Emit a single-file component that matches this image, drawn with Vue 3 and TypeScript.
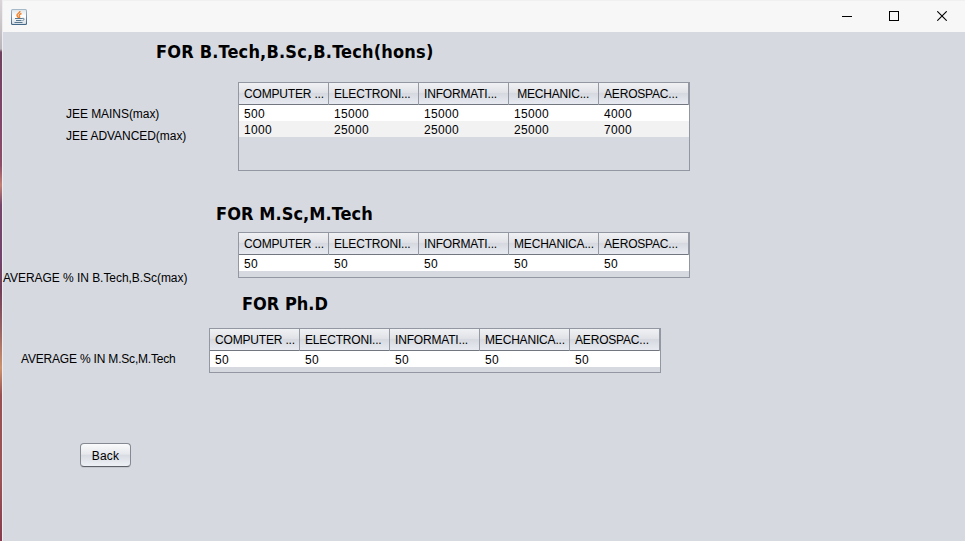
<script setup lang="ts">
interface Section {
  id: string
  title: string
  labels: string[]
  columns: string[]
  rows: string[][]
}

const sections: Section[] = [
  {
    id: 'btech',
    title: 'FOR B.Tech,B.Sc,B.Tech(hons)',
    labels: ['JEE MAINS(max)', 'JEE ADVANCED(max)'],
    columns: ['COMPUTER ...', 'ELECTRONI...', 'INFORMATI...', '\u00a0MECHANIC...', 'AEROSPAC...'],
    rows: [
      ['500', '15000', '15000', '15000', '4000'],
      ['1000', '25000', '25000', '25000', '7000'],
    ],
  },
  {
    id: 'mtech',
    title: 'FOR M.Sc,M.Tech',
    labels: ['AVERAGE % IN B.Tech,B.Sc(max)'],
    columns: ['COMPUTER ...', 'ELECTRONI...', 'INFORMATI...', 'MECHANICA...', 'AEROSPAC...'],
    rows: [['50', '50', '50', '50', '50']],
  },
  {
    id: 'phd',
    title: 'FOR Ph.D',
    labels: ['AVERAGE % IN M.Sc,M.Tech'],
    columns: ['COMPUTER ...', 'ELECTRONI...', 'INFORMATI...', 'MECHANICA...', 'AEROSPAC...'],
    rows: [['50', '50', '50', '50', '50']],
  },
]
</script>

<template>
  <div class="desktop">
    <div class="window">
      <header class="titlebar">
        <svg class="java" width="16" height="16" viewBox="0 0 16 16">
          <defs>
            <linearGradient id="tile" x1="0" y1="0" x2="0" y2="1">
              <stop offset="0" stop-color="#a9bccb" />
              <stop offset="1" stop-color="#3f6484" />
            </linearGradient>
            <linearGradient id="face" x1="0" y1="0" x2="0" y2="1">
              <stop offset="0" stop-color="#dfe7ec" />
              <stop offset=".45" stop-color="#ffffff" />
              <stop offset="1" stop-color="#d5dfe6" />
            </linearGradient>
          </defs>
          <rect width="16" height="16" rx="1.5" fill="url(#tile)" />
          <rect x="1" y="1" width="14" height="14" rx=".8" fill="url(#face)" />
          <path d="M9 2C9.3 4 5.5 4.600 6 6.500C6.200 7.500 7.500 8 7.500 9M10.500 4.500C8.500 5.300 7.500 6 8.500 7.200C9 8 8.600 8.600 8 9" fill="none" stroke="#ee8430" stroke-width="1.400" />
          <path d="M4 9.500H11M5 11.500H10.500M3.500 13.500H11.500M11 9.500C14 8.700 13.500 11.200 11.500 11.500" fill="none" stroke="#58788f" stroke-width="1" />
        </svg>
        <div class="controls">
          <svg width="10" height="10" viewBox="0 0 10 10"><path d="M0 5.500H10" /></svg>
          <svg width="10" height="10" viewBox="0 0 10 10"><rect x=".5" y=".5" width="9" height="9" /></svg>
          <svg class="close" width="10" height="10" viewBox="0 0 10 10"><path d="M.3.300L9.700 9.700M9.700.300L.3 9.700" /></svg>
        </div>
      </header>
      <main class="content">
        <section v-for="s in sections" :key="s.id" class="section" :class="s.id">
          <h2>{{ s.title }}</h2>
          <div class="body">
            <div class="labels">
              <div v-for="l in s.labels" :key="l" class="label">{{ l }}</div>
            </div>
            <div class="table">
              <div class="row head">
                <div v-for="c in s.columns" :key="c" class="cell">{{ c }}</div>
              </div>
              <div v-for="(r, i) in s.rows" :key="i" class="row">
                <div v-for="(v, j) in r" :key="j" class="cell">{{ v }}</div>
              </div>
            </div>
          </div>
        </section>
        <button class="back" type="button">Back</button>
      </main>
    </div>
  </div>
</template>

<style>
body {
  overflow: hidden;
}
</style>

<style scoped>
.desktop {
  box-sizing: border-box;
  width: 965px;
  height: 541px;
  padding-left: 2px;
  background: linear-gradient(#d9d5d9 0, #b9b5b9 49px, #70405f 52px, #81456a 120px, #8d4d67 165px, #c38074 185px, #76456c 205px, #71426b 260px, #723e58 290px, #986363 330px, #cc936d 368px, #985052 395px, #9b5355 480px, #873b4d 541px);
  font-family: "Liberation Sans", Arial, sans-serif;
  font-size: 12px;
  color: #000;
}
.window {
  box-sizing: border-box;
  height: 541px;
  border-left: 1px solid #ecedf1;
  background: #d6d9e0;
}
.titlebar {
  box-sizing: border-box;
  display: flex;
  align-items: center;
  justify-content: space-between;
  height: 32px;
  padding: 0 18px 0 8px;
  border-top: 1px solid #f0f0f0;
  background: #f7f7f7;
}
.controls {
  display: flex;
  gap: 37px;
  padding-bottom: 1px;
}
.controls svg {
  display: block;
  fill: none;
  stroke: #000;
  stroke-width: 1;
  shape-rendering: crispEdges;
}
.controls .close {
  margin-left: 1px;
  shape-rendering: auto;
  stroke-width: 1.1;
}
h2 {
  margin: 0;
  font: bold 18px/22px "DejaVu Sans Condensed", "DejaVu Sans", sans-serif;
  font-stretch: condensed;
  white-space: nowrap;
}
.body {
  display: flex;
}
.labels {
  flex: none;
  box-sizing: border-box;
}
.label {
  height: 22px;
  line-height: 22px;
  letter-spacing: -0.05px;
  white-space: nowrap;
}
.table {
  box-sizing: border-box;
  width: 452px;
  border: 1px solid #9297a1;
}
.row {
  display: grid;
  grid-template-columns: repeat(5, 90px);
  height: 16px;
  line-height: 18px;
  letter-spacing: 0.3px;
  background: #fff;
}
.row:nth-child(odd):not(.head) {
  background: #f2f2f2;
}
.cell {
  box-sizing: border-box;
  padding-left: 5px;
  white-space: nowrap;
}
.head {
  height: 22px;
  box-sizing: border-box;
  line-height: 22px;
  letter-spacing: -0.18px;
  border-bottom: 1px solid #72777f;
  background: linear-gradient(#f0f1f3, #e0e2e7 45%, #d6d9df 50%, #e7eaf0);
}
.head .cell {
  border-right: 1px solid #9599a3;
}
.btech {
  padding-top: 9px;
}
.btech h2 {
  height: 41px;
  padding-left: 153px;
  letter-spacing: 0.19px;
}
.btech .labels {
  width: 235px;
  padding: 21px 0 0 63px;
}
.btech .table {
  height: 89px;
}
.mtech {
  padding-top: 32px;
}
.mtech h2 {
  height: 29px;
  padding-left: 213px;
  letter-spacing: 0.08px;
}
.mtech .labels {
  width: 235px;
  padding-top: 35px;
}
.mtech .table {
  height: 46px;
}
.phd .table {
  height: 45px;
}
.phd h2 {
  height: 35px;
  padding-left: 239px;
}
.mtech .body {
  height: 61px;
}
.phd .body {
  height: 46px;
}
.phd .labels {
  width: 206px;
  padding: 20px 0 0 18px;
}
.phd .label {
  letter-spacing: -0.19px;
}
.back {
  display: block;
  width: 51px;
  height: 24px;
  margin: 69px 0 0 77px;
  padding: 1px 0 0;
  border: 1px solid #858991;
  border-bottom-color: #5d6067;
  border-radius: 4px;
  background: linear-gradient(#fafbfc, #e6e8ec 45%, #d9dce2 52%, #eef1f6);
  box-shadow: 0 1px 0 #c5c8ce;
  font: inherit;
  line-height: 22px;
  letter-spacing: 0.2px;
  color: #000;
}
</style>
